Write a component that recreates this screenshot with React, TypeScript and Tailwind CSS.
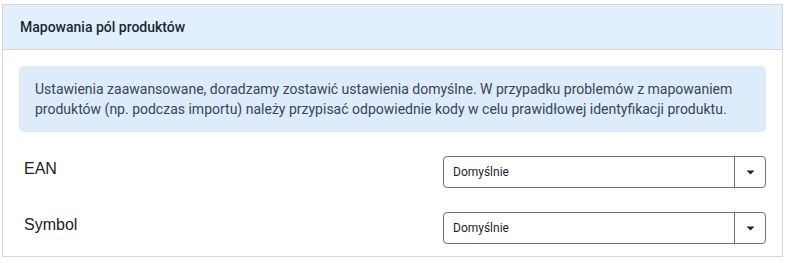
import React from 'react';

const FieldRow: React.FC<{ label: string; value: string; className?: string }> = ({ label, value, className }) => (
  <div className={`flex items-center ${className ?? ''}`}>
    <div className="flex-1 pl-[5px] pb-[6px] text-[16px] text-[#222] font-['Liberation_Sans',Arial,sans-serif]">{label}</div>
    <div className="flex h-[32px] w-[323px] items-stretch rounded-[4px] border border-[#6f6f6f] bg-white">
      <div className="flex flex-1 items-center pl-[9px] text-[12px] text-[#1f1f1f]">{value}</div>
      <div className="flex w-[31px] items-center justify-center border-l border-[#6f6f6f]">
        <svg width="9" height="5" viewBox="0 0 9 5">
          <path d="M0.5 0.5 L8.5 0.5 L4.5 4.5 Z" fill="#222" />
        </svg>
      </div>
    </div>
  </div>
);

export default function App() {
  return (
    <div className="bg-white pt-[4px] pl-[2px] w-[786px] h-[263px] font-['Roboto',sans-serif]">
      <div className="w-[781px] border border-[#d6d6d6] bg-white">
        <div className="flex h-[45px] items-center border-b border-[#d6d6d6] bg-[#e2effd] px-[17px] text-[14px] font-medium text-[#1d2733]">
          Mapowania pól produktów
        </div>
        <div className="px-[16px] pt-[16px] pb-[12px]">
          <div className="rounded-[5px] bg-[#deebfb] px-[16px] py-[13px] text-[14px] leading-[20px] text-[#374657]">
            Ustawienia zaawansowane, doradzamy zostawić ustawienia domyślne. W przypadku problemów z mapowaniem
            produktów (np. podczas importu) należy przypisać odpowiednie kody w celu prawidłowej identyfikacji produktu.
          </div>
          <FieldRow label="EAN" value="Domyślnie" className="mt-[24px]" />
          <FieldRow label="Symbol" value="Domyślnie" className="mt-[24px]" />
        </div>
      </div>
    </div>
  );
}
